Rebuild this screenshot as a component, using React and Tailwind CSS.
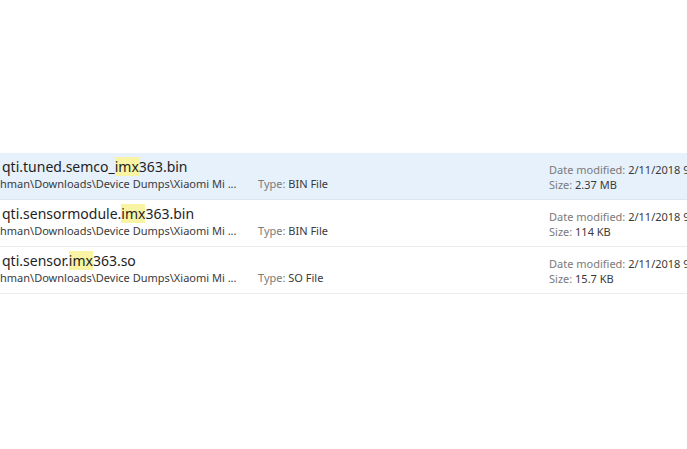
const results = [
  {
    pre: 'qti.tuned.semco_',
    hit: 'imx',
    post: '363.bin',
    type: 'BIN File',
    size: '2.37 MB',
    selected: true,
  },
  {
    pre: 'qti.sensormodule.',
    hit: 'imx',
    post: '363.bin',
    type: 'BIN File',
    size: '114 KB',
  },
  {
    pre: 'qti.sensor.',
    hit: 'imx',
    post: '363.so',
    type: 'SO File',
    size: '15.7 KB',
  },
];

const ResultRow = ({ item }) => (
  <div
    className={`flex h-[47px] border-b ${
      item.selected ? 'bg-[#e6f1fc] border-[#dbe6f2]' : 'bg-white border-[#ececec]'
    }`}
  >
    <div className="w-[258px] shrink-0 pl-[2px] pt-[5px]">
      <div className="text-[14px] leading-[18px] text-[#1e1e1e] whitespace-nowrap">
        {item.pre}
        <span className="bg-[#f8f4a4]">{item.hit}</span>
        {item.post}
      </div>
      <div className="-ml-[2px] mt-[1px] text-[11px] leading-[14px] text-[#3a3a3a] whitespace-nowrap">
        hman\Downloads\Device Dumps\Xiaomi Mi ...
      </div>
    </div>
    <div className="w-[291px] shrink-0 pt-[24px] text-[11px] leading-[14px] whitespace-nowrap">
      <span className="text-[#7a7a7a]">Type: </span>
      <span className="text-[#3a3a3a]">{item.type}</span>
    </div>
    <div className="flex-1 overflow-hidden pt-[9px] text-[11px] leading-[15px] whitespace-nowrap">
      <div>
        <span className="text-[#7a7a7a]">Date modified: </span>
        <span className="text-[#3a3a3a]">2/11/2018 9:41 AM</span>
      </div>
      <div>
        <span className="text-[#7a7a7a]">Size: </span>
        <span className="text-[#3a3a3a]">{item.size}</span>
      </div>
    </div>
  </div>
);

export default function App() {
  return (
    <div
      className="w-[687px] h-[449px] overflow-hidden bg-white pt-[153px]"
      style={{ fontFamily: '"Noto Sans", "Open Sans", sans-serif' }}
    >
      {results.map((item) => (
        <ResultRow key={item.pre} item={item} />
      ))}
    </div>
  );
}
